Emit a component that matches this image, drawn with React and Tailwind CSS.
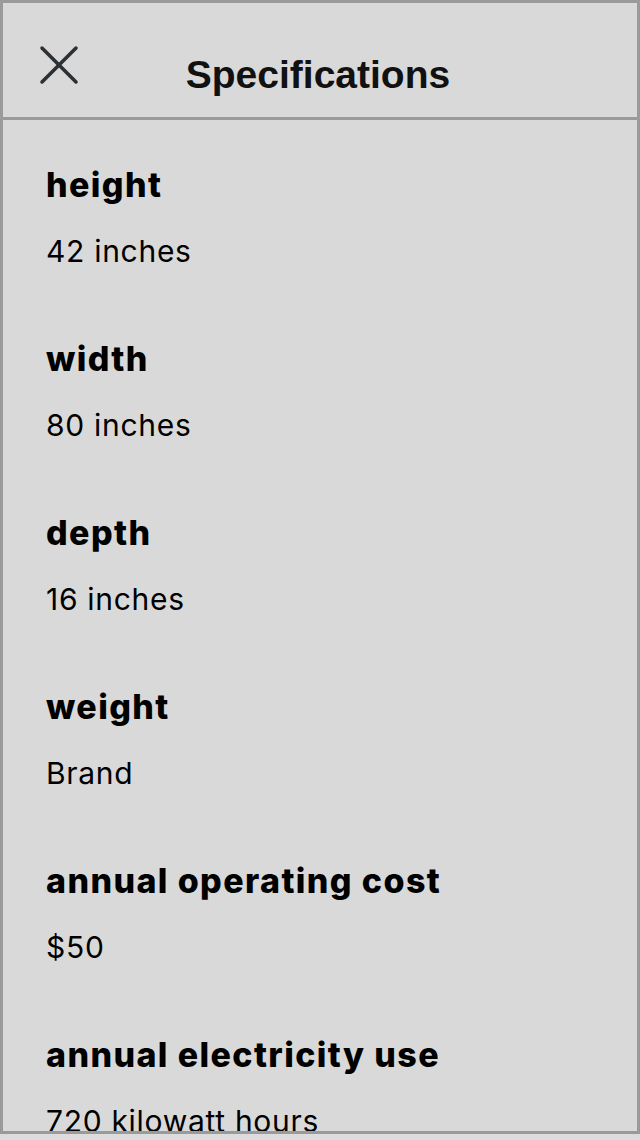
const specs = [
  { label: "height", value: "42 inches" },
  { label: "width", value: "80 inches" },
  { label: "depth", value: "16 inches" },
  { label: "weight", value: "Brand" },
  { label: "annual operating cost", value: "$50" },
  { label: "annual electricity use", value: "720 kilowatt hours" },
];

function CloseIcon() {
  return (
    <svg width="40" height="40" viewBox="0 0 40 40" fill="none" stroke="#2b3035" strokeWidth="3.5" strokeLinecap="round">
      <line x1="3" y1="3" x2="37" y2="37" />
      <line x1="37" y1="3" x2="3" y2="37" />
    </svg>
  );
}

export default function App() {
  return (
    <div className="h-[1140px] w-[640px] bg-[#dcdcdc]">
      <div className="flex h-[1134px] flex-col overflow-hidden border-[3px] border-[#9a9a9a] bg-[#d9d9d9]">
        <header className="flex h-[117px] shrink-0 items-start border-b-[3px] border-[#9a9a9a] pl-[36px] pr-[32px]">
          <button className="mt-[42px] shrink-0">
            <CloseIcon />
          </button>
          <h1 className="mt-[50px] flex-1 text-center font-['Liberation_Sans',Arial,sans-serif] text-[39px] font-bold leading-[44px] text-[#111]">
            Specifications
          </h1>
          <div className="w-[48px] shrink-0" />
        </header>

        <div className="flex flex-col gap-[70px] pl-[43px] pt-[45px] font-['Inter','Noto_Sans',sans-serif] text-black">
          {specs.map((spec) => (
            <div key={spec.label} className="flex flex-col">
              <p className="mb-[28px] text-[34px] font-extrabold leading-[40px] tracking-[1.4px]">{spec.label}</p>
              <p className="text-[30px] leading-[36px] tracking-[0.7px]">{spec.value}</p>
            </div>
          ))}
        </div>
      </div>
    </div>
  );
}
